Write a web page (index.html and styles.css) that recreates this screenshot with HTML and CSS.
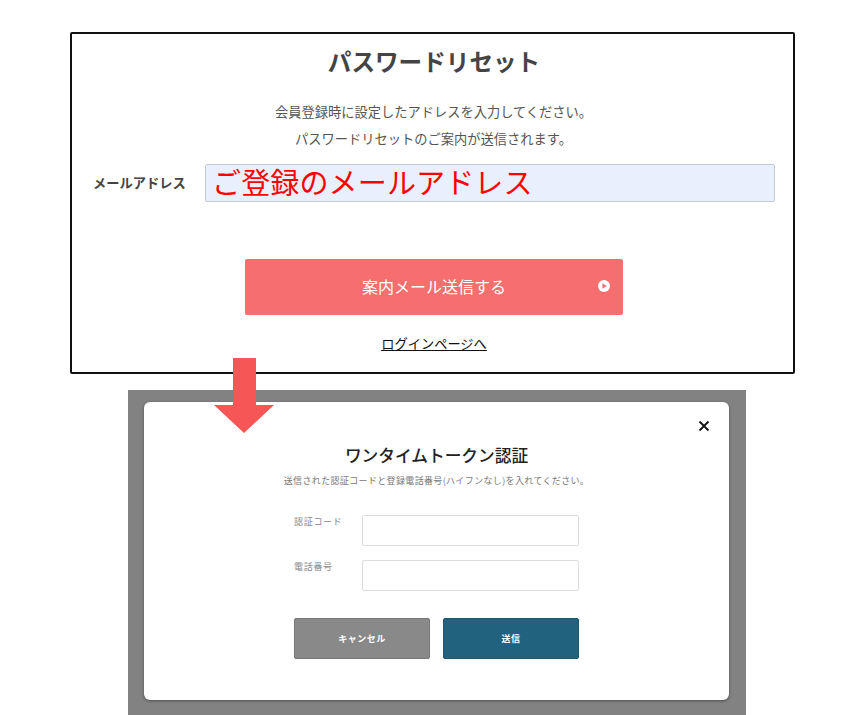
FILE: index.html
```html
<!DOCTYPE html>
<html lang="ja">
<head>
<meta charset="utf-8">
<title>パスワードリセット</title>
<link rel="stylesheet" href="styles.css">
</head>
<body>
<section class="card">
  <h1 class="card-title">パスワードリセット</h1>
  <p class="card-text first">会員登録時に設定したアドレスを入力してください。</p>
  <p class="card-text">パスワードリセットのご案内が送信されます。</p>
  <div class="email-row">
    <span class="email-label">メールアドレス</span>
    <div class="email-input">ご登録のメールアドレス</div>
  </div>
  <div class="submit">
    <span>案内メール送信する</span>
    <svg class="submit-icon" viewBox="0 0 12 12" width="12" height="12"><circle cx="6" cy="6" r="6" fill="#fff"/><path d="M4.400 3.200 8.800 6 4.400 8.800z" fill="#f76e6e"/></svg>
  </div>
  <a class="login-link" href="#">ログインページへ</a>
</section>
<section class="backdrop">
  <div class="modal">
    <svg class="close" viewBox="0 0 12 12" width="12" height="12"><path d="M1.500 1.500l9 9M10.500 1.500l-9 9" stroke="#111" stroke-width="1.800" fill="none"/></svg>
    <h2 class="modal-title">ワンタイムトークン認証</h2>
    <p class="modal-text">送信された認証コードと登録電話番号(ハイフンなし)を入れてください。</p>
    <div class="field"><span class="field-label">認証コード</span><div class="field-input"></div></div>
    <div class="field"><span class="field-label">電話番号</span><div class="field-input"></div></div>
    <div class="actions">
      <div class="btn btn-cancel">キャンセル</div>
      <div class="btn btn-send">送信</div>
    </div>
  </div>
</section>
<svg class="arrow" viewBox="0 0 60 75" width="60" height="75"><path d="M19 0h23v47h18L30 75 0 47h19z" fill="#f65656"/></svg>
</body>
</html>
```
FILE: styles.css
```css
* { box-sizing: border-box; }
html, body { margin: 0; padding: 0; }
body {
  position: relative;
  width: 865px;
  height: 715px;
  overflow: hidden;
  background: #fff;
  padding: 32px 0 0 70px;
  font-family: "Noto Sans CJK JP", "Noto Sans", sans-serif;
}
.card {
  width: 725px;
  height: 342px;
  border: 2px solid #111;
  border-radius: 2px;
  padding: 10px 18px 0 18px;
  display: flex;
  flex-direction: column;
  align-items: center;
  color: #444;
}
.card-title {
  margin: 0 0 0 3px;
  font-size: 23.600px;
  line-height: 34px;
  font-weight: 700;
  color: #444;
}
.card-text {
  margin: 0 0 0 2px;
  font-size: 13.250px;
  line-height: 27px;
  color: #555;
}
.card-text.first { margin-top: 20px; }
.email-row {
  align-self: stretch;
  display: flex;
  align-items: center;
  margin-top: 12px;
  height: 38px;
}
.email-label {
  width: 115px;
  padding: 0 0 1px 3px;
  font-size: 13.250px;
  font-weight: 700;
  color: #444;
}
.email-input {
  flex: 1;
  height: 38px;
  background: #e8f0fd;
  border: 1px solid #c4cad4;
  border-radius: 2px;
  padding-left: 6px;
  font-size: 29px;
  letter-spacing: .15px;
  line-height: 32px;
  color: #f00;
}
.submit {
  position: relative;
  margin: 57px 0 0 3px;
  width: 378px;
  height: 56px;
  padding-bottom: 2px;
  background: #f76e6e;
  border-radius: 2px;
  color: #fff;
  font-size: 16px;
  display: flex;
  align-items: center;
  justify-content: center;
}
.submit-icon {
  position: absolute;
  right: 13px;
  top: 21px;
}
.login-link {
  margin: 19px 0 0 3px;
  font-size: 13.250px;
  line-height: 20px;
  color: #111;
  text-decoration: underline;
}
.arrow {
  position: absolute;
  left: 214px;
  top: 358px;
}
.backdrop {
  width: 618px;
  height: 325px;
  margin: 16px 0 0 58px;
  padding: 12px 17px 15px 16px;
  background: #828282;
}
.modal {
  position: relative;
  height: 298px;
  background: #fff;
  border-radius: 6px;
  box-shadow: 0 1px 3px rgba(0, 0, 0, .4);
  padding-top: 41px;
  display: flex;
  flex-direction: column;
  align-items: center;
}
.close {
  position: absolute;
  top: 18px;
  right: 19px;
}
.modal-title {
  margin: 0;
  font-size: 16.700px;
  line-height: 24px;
  font-weight: 500;
  color: #222;
}
.modal-text {
  margin: 7px 0 0;
  font-size: 9px;
  line-height: 14px;
  letter-spacing: .35px;
  color: #777;
}
.field {
  width: 285px;
  display: flex;
  margin-top: 14px;
}
.modal-text + .field { margin-top: 27px; }
.field-label {
  width: 68px;
  font-size: 9px;
  line-height: 14px;
  letter-spacing: .7px;
  color: #888;
}
.field-input {
  width: 217px;
  height: 31px;
  border: 1px solid #ddd;
  border-radius: 2px;
}
.actions {
  width: 285px;
  display: flex;
  gap: 13px;
  margin-top: 27px;
}
.btn {
  flex: 1;
  height: 41px;
  border-radius: 2px;
  display: flex;
  align-items: center;
  justify-content: center;
  font-size: 9px;
  font-weight: 700;
  letter-spacing: .5px;
  color: #fff;
}
.btn-cancel { background: #898989; border: 1px solid #777; }
.btn-send { background: #21637f; border: 1px solid #1c566f; }
```
